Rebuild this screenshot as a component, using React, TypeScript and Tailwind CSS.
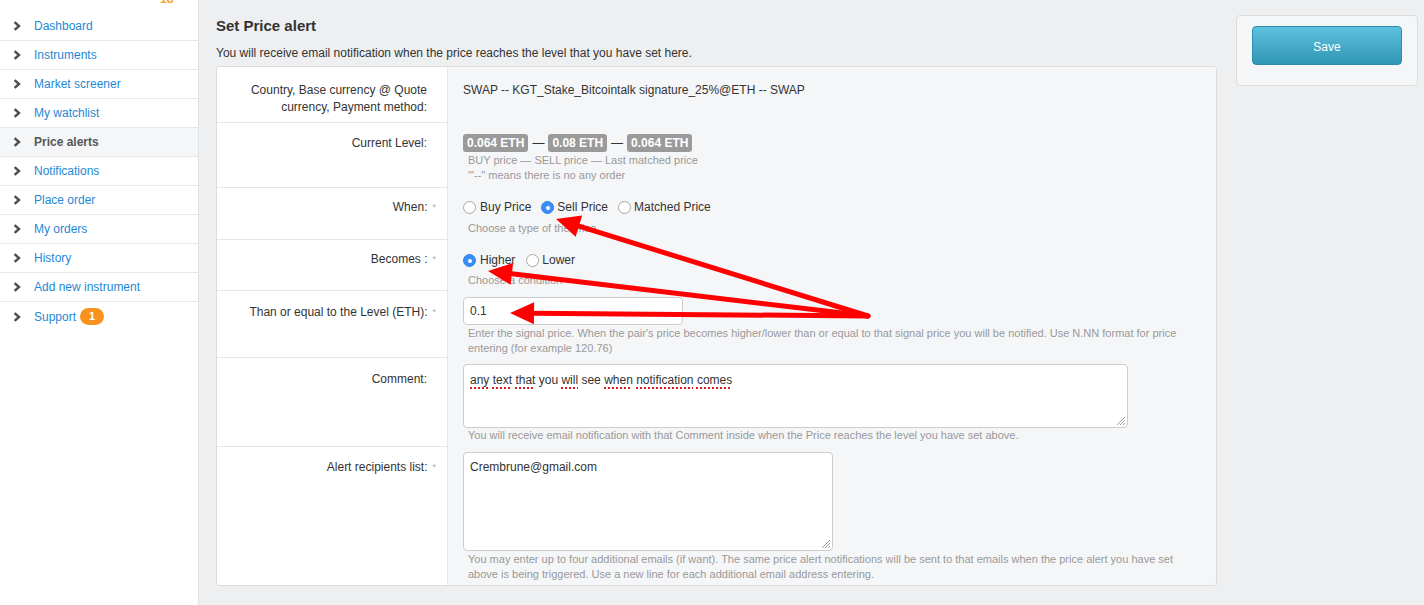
import React from 'react'

const NAV = [
  'Dashboard',
  'Instruments',
  'Market screener',
  'My watchlist',
  'Price alerts',
  'Notifications',
  'Place order',
  'My orders',
  'History',
  'Add new instrument',
  'Support',
]

const ACTIVE = 'Price alerts'

// red annotation arrows, all starting at the same point
const ORIGIN: [number, number] = [868, 316]
const TIPS: [number, number][] = [
  [556, 219],
  [488, 271],
  [510, 313],
]

function arrowGeometry(tip: [number, number]) {
  const [ox, oy] = ORIGIN
  const [tx, ty] = tip
  const dx = tx - ox
  const dy = ty - oy
  const len = Math.sqrt(dx * dx + dy * dy)
  const ux = dx / len
  const uy = dy / len
  const L = 24
  const W = 11
  const bx = tx - ux * L
  const by = ty - uy * L
  const px = -uy
  const py = ux
  const head = `${tx},${ty} ${bx + px * W},${by + py * W} ${bx - px * W},${by - py * W}`
  return { bx, by, head }
}

function Chevron() {
  return (
    <svg width="8" height="10" viewBox="0 0 8 10" className="shrink-0">
      <path d="M1.6 1.2 L6 5 L1.6 8.8" fill="none" stroke="#4d4d4d" strokeWidth="2.4" />
    </svg>
  )
}

function Radio({ checked = false }: { checked?: boolean }) {
  if (checked) {
    return (
      <span className="w-[13px] h-[13px] rounded-full bg-[#3b8ef5] border border-[#2f80e6] flex items-center justify-center shrink-0">
        <span className="w-[4px] h-[4px] rounded-full bg-white" />
      </span>
    )
  }
  return <span className="w-[13px] h-[13px] rounded-full bg-white border border-[#a8a8a8] shrink-0" />
}

function Star() {
  return <span className="ml-[5px] -mr-[9px] text-[9px] text-[#aaa] align-top">*</span>
}

function Badge({ children }: { children: React.ReactNode }) {
  return (
    <span className="inline-flex items-center h-[18px] px-[4px] rounded-[3px] bg-[#9a9a9a] text-white font-bold text-[12px]">
      {children}
    </span>
  )
}

function Help({ children, className = '' }: { children: React.ReactNode; className?: string }) {
  return <div className={`pl-[5px] text-[11px] leading-[15px] text-[#999] ${className}`}>{children}</div>
}

const SPELL = 'underline decoration-dotted decoration-[#e01b1b] decoration-2 underline-offset-[3px]'

export default function App() {
  return (
    <div
      className="relative flex w-[1424px] h-[605px] overflow-hidden bg-[#eeeff1] text-[#333]"
      style={{ fontFamily: '"Liberation Sans", Arial, Helvetica, sans-serif' }}
    >
      {/* Sidebar */}
      <aside className="relative w-[199px] shrink-0 bg-white border-r border-[#e2e3e5] pt-[12px]">
        <span className="absolute left-[160px] -top-[10px] text-[12px] font-bold text-[#f5a623]">18</span>
        {NAV.map((item, i) => {
          const active = item === ACTIVE
          const last = i === NAV.length - 1
          return (
            <div
              key={item}
              className={`flex items-center h-[29px] pl-[13px] gap-[13px] text-[12px] ${
                last ? '' : 'border-b border-[#e8e8e8]'
              } ${active ? 'bg-[#f5f6f8] font-bold text-[#555]' : 'text-[#1e88d4]'}`}
            >
              <Chevron />
              <span>{item}</span>
              {item === 'Support' && (
                <span className="-ml-[9px] inline-flex items-center justify-center w-[24px] h-[17px] rounded-full bg-[#f7931e] text-white font-bold text-[11px]">
                  1
                </span>
              )}
            </div>
          )
        })}
      </aside>

      {/* Main */}
      <main className="flex-1 flex items-start gap-[19px] pl-[17px] pr-[6px] pt-[15px]">
        <section className="flex-1 min-w-0">
          <h2 className="mt-[2px] text-[15px] leading-[18px] font-bold text-[#333]">Set Price alert</h2>
          <p className="mt-[10px] text-[12px] leading-[17px]">
            You will receive email notification when the price reaches the level that you have set here.
          </p>

          <div className="mt-[4px] border border-[#dcdcdc] rounded-[3px] bg-[#f5f6f8] overflow-hidden text-[12px] leading-[17px]">
            {/* Instrument */}
            <div className="flex h-[56px]">
              <div className="w-[231px] shrink-0 bg-white border-r border-b border-[#e6e6e6] text-right pr-[20px] pl-[20px] pt-[15px]">
                Country, Base currency @ Quote currency, Payment method:
              </div>
              <div className="flex-1 pl-[15px] pt-[15px]">
                SWAP -- KGT_Stake_Bitcointalk signature_25%@ETH -- SWAP
              </div>
            </div>

            {/* Current level */}
            <div className="flex h-[65px]">
              <div className="w-[231px] shrink-0 bg-white border-r border-b border-[#e6e6e6] text-right pr-[20px] pt-[12px]">
                Current Level:
              </div>
              <div className="flex-1 pl-[15px] pt-[11px]">
                <div className="flex items-center">
                  <Badge>0.064 ETH</Badge>
                  <span className="mx-[4px]">—</span>
                  <Badge>0.08 ETH</Badge>
                  <span className="mx-[4px]">—</span>
                  <Badge>0.064 ETH</Badge>
                </div>
                <Help className="mt-[1px]">
                  BUY price — SELL price — Last matched price
                  <br />
                  '"--" means there is no any order
                </Help>
              </div>
            </div>

            {/* When */}
            <div className="flex h-[52px]">
              <div className="w-[231px] shrink-0 bg-white border-r border-b border-[#e6e6e6] text-right pr-[20px] pt-[11px]">
                When:
                <Star />
              </div>
              <div className="flex-1 pl-[15px] pt-[11px]">
                <div className="flex items-center h-[17px]">
                  <Radio />
                  <span className="ml-[4px] mr-[10px]">Buy Price</span>
                  <Radio checked />
                  <span className="ml-[3px] mr-[10px]">Sell Price</span>
                  <Radio />
                  <span className="ml-[3px]">Matched Price</span>
                </div>
                <Help className="mt-[5px]">Choose a type of the price</Help>
              </div>
            </div>

            {/* Becomes */}
            <div className="flex h-[51px]">
              <div className="w-[231px] shrink-0 bg-white border-r border-b border-[#e6e6e6] text-right pr-[20px] pt-[11px]">
                Becomes :
                <Star />
              </div>
              <div className="flex-1 pl-[15px] pt-[12px]">
                <div className="flex items-center h-[17px]">
                  <Radio checked />
                  <span className="ml-[4px] mr-[11px]">Higher</span>
                  <Radio />
                  <span className="ml-[3px]">Lower</span>
                </div>
                <Help className="mt-[4px]">Choose a condition</Help>
              </div>
            </div>

            {/* Level */}
            <div className="flex h-[67px]">
              <div className="w-[231px] shrink-0 bg-white border-r border-b border-[#e6e6e6] text-right pr-[20px] pt-[13px]">
                Than or equal to the Level (ETH):
                <Star />
              </div>
              <div className="flex-1 pl-[15px] pr-[26px] pt-[6px]">
                <input
                  defaultValue="0.1"
                  className="block w-[220px] h-[28px] border border-[#cccccc] rounded-[4px] bg-white px-[6px] text-[12px] text-[#333] outline-none"
                />
                <Help className="pt-[1px]">
                  Enter the signal price. When the pair's price becomes higher/lower than or equal to that signal price
                  you will be notified. Use N.NN format for price entering (for example 120.76)
                </Help>
              </div>
            </div>

            {/* Comment */}
            <div className="flex h-[89px]">
              <div className="w-[231px] shrink-0 bg-white border-r border-b border-[#e6e6e6] text-right pr-[20px] pt-[13px]">
                Comment:
              </div>
              <div className="flex-1 pl-[15px] pt-[6px]">
                <div className="relative w-[665px] h-[64px] border border-[#cccccc] rounded-[4px] bg-white px-[6px] pt-[7px]">
                  <span className={SPELL}>any</span> <span className={SPELL}>text</span>{' '}
                  <span className={SPELL}>that</span> you <span className={SPELL}>will</span> see{' '}
                  <span className={SPELL}>when</span> <span className={SPELL}>notification</span>{' '}
                  <span className={SPELL}>comes</span>
                  <svg width="10" height="10" viewBox="0 0 10 10" className="absolute right-[1px] bottom-[1px]">
                    <path d="M9 1 L1 9 M9 4 L4 9 M9 7 L7 9" stroke="#9a9a9a" strokeWidth="1" />
                  </svg>
                </div>
                <Help>You will receive email notification with that Comment inside when the Price reaches the level you have set above.</Help>
              </div>
            </div>

            {/* Recipients */}
            <div className="flex h-[138px]">
              <div className="w-[231px] shrink-0 bg-white border-r border-[#e6e6e6] text-right pr-[20px] pt-[12px]">
                Alert recipients list:
                <Star />
              </div>
              <div className="flex-1 pl-[15px] pr-[26px] pt-[5px]">
                <div className="relative w-[370px] h-[99px] border border-[#cccccc] rounded-[4px] bg-white px-[6px] pt-[6px]">
                  Crembrune@gmail.com
                  <svg width="10" height="10" viewBox="0 0 10 10" className="absolute right-[1px] bottom-[1px]">
                    <path d="M9 1 L1 9 M9 4 L4 9 M9 7 L7 9" stroke="#9a9a9a" strokeWidth="1" />
                  </svg>
                </div>
                <Help className="pt-[1px]">
                  You may enter up to four additional emails (if want). The same price alert notifications will be sent
                  to that emails when the price alert you have set above is being triggered. Use a new line for each
                  additional email address entering.
                </Help>
              </div>
            </div>
          </div>
        </section>

        {/* Actions */}
        <aside className="w-[182px] h-[71px] shrink-0 border border-[#dcdcdc] rounded-[4px] bg-[#f5f6f8] pt-[10px] pl-[15px]">
          <button className="w-[150px] h-[39px] pt-[3px] rounded-[4px] border border-[#2b8fab] bg-gradient-to-b from-[#5ec1de] to-[#2e97b5] text-white text-[12px]">
            Save
          </button>
        </aside>
      </main>

      {/* Annotation arrows */}
      <svg className="absolute inset-0 pointer-events-none" width="1424" height="605" viewBox="0 0 1424 605">
        {TIPS.map((tip, i) => {
          const g = arrowGeometry(tip)
          return (
            <g key={i}>
              <line x1={ORIGIN[0]} y1={ORIGIN[1]} x2={g.bx} y2={g.by} stroke="#ff0000" strokeWidth="5" strokeLinecap="round" />
              <polygon points={g.head} fill="#ff0000" />
            </g>
          )
        })}
      </svg>
    </div>
  )
}
